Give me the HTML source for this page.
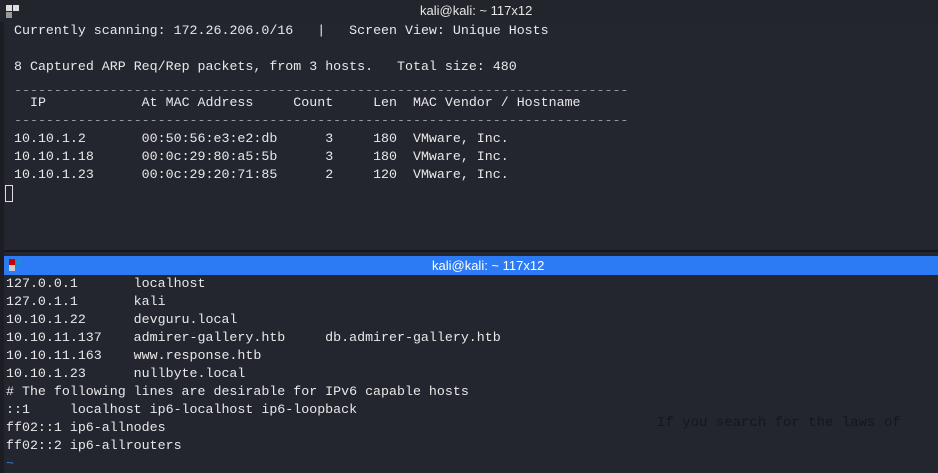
<!DOCTYPE html>
<html><head><style>
body{margin:0;width:938px;height:473px;background:#23262e;overflow:hidden;position:relative;font-family:"Liberation Mono",monospace;}
.t{position:absolute;white-space:pre;color:#e8e8e8;font-size:13.3px;line-height:18px;}
.bar{position:absolute;left:4px;right:0;font-family:"Liberation Sans",sans-serif;font-size:13px;color:#e6e6e6;}
</style></head><body>
<div style="position:absolute;left:0;top:0;width:4px;height:473px;background:#1b1d23"></div>
<div class="bar" style="top:0;height:22px;background:#22252b;left:0"></div>
<div style="position:absolute;left:6px;top:5px;width:6px;height:6px;background:#ddd"></div>
<div style="position:absolute;left:13px;top:5px;width:6px;height:6px;background:#ddd"></div>
<div style="position:absolute;left:6px;top:12px;width:6px;height:6px;background:#999"></div>
<div class="bar" style="top:3px;left:420px;width:140px;">kali@kali: ~ 117x12</div>
<div class="t" style="left:14px;top:22px">Currently scanning: 172.26.206.0/16   |   Screen View: Unique Hosts

8 Captured ARP Req/Rep packets, from 3 hosts.   Total size: 480</div>
<div class="t" style="left:14px;top:82px;color:#999">-----------------------------------------------------------------------------</div>
<div class="t" style="left:14px;top:94px">  IP            At MAC Address     Count     Len  MAC Vendor / Hostname
<span style="color:#999">-----------------------------------------------------------------------------</span>
10.10.1.2       00:50:56:e3:e2:db      3     180  VMware, Inc.
10.10.1.18      00:0c:29:80:a5:5b      3     180  VMware, Inc.
10.10.1.23      00:0c:29:20:71:85      2     120  VMware, Inc.</div>
<div style="position:absolute;left:5px;top:185px;width:8px;height:17px;border:1px solid #ddd;box-sizing:border-box"></div>
<div style="position:absolute;left:4px;top:250px;right:0;height:2px;background:#15171b"></div>
<div class="bar" style="top:256px;height:19px;background:#2c7bf5"></div>
<div style="position:absolute;left:9px;top:259px;width:6px;height:6px;background:#c00"></div>
<div style="position:absolute;left:15px;top:259px;width:6px;height:6px;background:#1a8fd8"></div>
<div style="position:absolute;left:9px;top:265px;width:6px;height:6px;background:#ccc"></div>
<div class="bar" style="top:258px;left:432px;width:140px;color:#fff">kali@kali: ~ 117x12</div>
<div class="t" style="left:6px;top:275px">127.0.0.1       localhost
127.0.1.1       kali
10.10.1.22      devguru.local
10.10.11.137    admirer-gallery.htb     db.admirer-gallery.htb
10.10.11.163    www.response.htb
10.10.1.23      nullbyte.local
# The following lines are desirable for IPv6 capable hosts
::1     localhost ip6-localhost ip6-loopback
ff02::1 ip6-allnodes
ff02::2 ip6-allrouters
<span style="color:#3a7de0">~</span></div>
<div class="t" style="left:657px;top:414px;color:#15171c;font-size:14px">If you search for the laws of</div>
</body></html>
